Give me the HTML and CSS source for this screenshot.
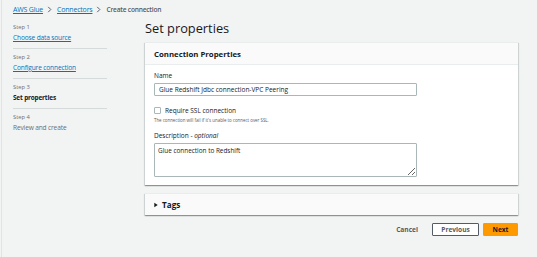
FILE: index.html
```html
<!DOCTYPE html>
<html>
<head>
<meta charset="utf-8">
<link rel="stylesheet" href="styles.css">
</head>
<body>
<div class="page">
  <nav class="crumbs">
    <a class="link">AWS Glue</a>
    <svg class="chev" viewBox="0 0 5 8" width="5" height="7"><path d="M1 1 L4 4 L1 7" fill="none" stroke="#545b64" stroke-width="1.1"/></svg>
    <a class="link">Connectors</a>
    <svg class="chev" viewBox="0 0 5 8" width="5" height="7"><path d="M1 1 L4 4 L1 7" fill="none" stroke="#545b64" stroke-width="1.1"/></svg>
    <span class="crumb-current">Create connection</span>
  </nav>
  <div class="content">
    <ul class="steps">
      <li class="step"><div class="step-label">Step 1</div><a class="link step-name">Choose data source</a></li>
      <li class="step"><div class="step-label">Step 2</div><a class="link step-name">Configure connection</a></li>
      <li class="step"><div class="step-label">Step 3</div><div class="step-name active">Set properties</div></li>
      <li class="step last"><div class="step-label">Step 4</div><div class="step-name disabled">Review and create</div></li>
    </ul>
    <main class="main">
      <h1 class="title">Set properties</h1>
      <section class="card">
        <div class="card-head">Connection Properties</div>
        <div class="card-body">
          <div class="label">Name</div>
          <div class="input">Glue Redshift Jdbc connection-VPC Peering</div>
          <div class="check-row"><span class="checkbox"></span><span class="check-text">Require SSL connection</span></div>
          <div class="hint">The connection will fail if it's unable to connect over SSL.</div>
          <div class="label desc-label">Description - <i>optional</i></div>
          <textarea class="textarea">Glue connection to Redshift</textarea>
        </div>
      </section>
      <section class="card tags">
        <svg class="caret" viewBox="0 0 6 8" width="4" height="6"><path d="M0.5 0.5 L5.5 4 L0.5 7.5 Z" fill="#16191f"/></svg>
        <span>Tags</span>
      </section>
      <div class="actions">
        <span class="btn-link">Cancel</span>
        <span class="btn btn-normal">Previous</span>
        <span class="btn btn-primary">Next</span>
      </div>
    </main>
  </div>
</div>
</body>
</html>
```
FILE: styles.css
```css
* { box-sizing: border-box; }
html, body { margin: 0; padding: 0; }
body {
  background: #f2f3f3;
  font-family: "Open Sans", "Noto Sans", sans-serif;
  color: #16191f;
  width: 537px;
  height: 257px;
  overflow: hidden;
}
.page {
  margin-left: 1px;
  border-left: 1px solid #e1e4e4;
  height: 257px;
  padding: 4px 20px 0 11px;
}
.link {
  color: #0073bb;
  text-decoration: underline;
  text-decoration-thickness: 1px;
  text-underline-offset: 1px;
}
.crumbs {
  display: flex;
  align-items: center;
  height: 11px;
  font-size: 7px;
  letter-spacing: -0.2px;
  line-height: 11px;
  font-weight: 400;
}
.chev { margin: 0 5px 0 4px; }
.crumb-current { color: #545b64; font-weight: 600; font-size: 6.6px; }
.content { display: flex; }
.steps {
  list-style: none;
  margin: 0;
  padding: 4px 0 0 0;
  width: 94px;
  flex: none;
}
.step {
  padding: 4px 0 5px 0;
  border-bottom: 1px solid #d5dbdb;
}
.step.last { border-bottom: none; }
.step-label {
  font-size: 5.8px;
  line-height: 9px;
  color: #687078;
}
.step-name {
  display: block;
  font-size: 6.6px;
  letter-spacing: -0.15px;
  line-height: 11px;
}
.step-name.active { font-weight: 700; color: #16191f; font-size: 6.4px; }
.step-name.disabled { color: #687078; }
.main {
  margin-left: 38px;
  width: 373px;
  flex: none;
}
.title {
  margin: 4px 0 5px 0;
  font-size: 12.8px;
  line-height: 18px;
  font-weight: 400;
}
.card {
  background: #fff;
  box-shadow: 0 1px 1px rgba(0,28,36,0.3), 1px 1px 1px rgba(0,28,36,0.1), -1px 1px 1px rgba(0,28,36,0.1);
  border-top: 1px solid #eaeded;
}
.card-head {
  background: #fafafa;
  border-bottom: 1px solid #eaeded;
  height: 22px;
  display: flex;
  align-items: center;
  padding: 0 9px;
  font-size: 7.8px;
  font-weight: 700;
}
.card-body { padding: 6px 9px 8px 9px; }
.label {
  font-size: 6.5px;
  line-height: 9px;
}
.input {
  margin-top: 3px;
  width: 263px;
  height: 13px;
  border: 1px solid #aab7b8;
  border-radius: 1px;
  font-size: 6.5px;
  line-height: 11px;
  padding: 0 4px;
}
.check-row {
  display: flex;
  align-items: center;
  margin-top: 9px;
  height: 10px;
}
.checkbox {
  width: 7px;
  height: 7px;
  border: 1px solid #aab7b8;
  border-radius: 1px;
  margin-right: 4px;
  background: #fff;
}
.check-text { font-size: 6.5px; }
.hint {
  margin-top: 1px;
  font-size: 4.4px;
  line-height: 8px;
  color: #545b64;
}
.desc-label { margin-top: 7px; }
.textarea {
  display: block;
  margin-top: 3px;
  width: 263px;
  height: 34px;
  border: 1px solid #aab7b8;
  border-radius: 1px;
  font-family: "Open Sans", "Noto Sans", sans-serif;
  font-size: 6.4px;
  line-height: 9px;
  padding: 2px 3px;
  color: #16191f;
  resize: vertical;
}
.tags {
  margin-top: 8px;
  height: 22px;
  display: flex;
  align-items: center;
  padding: 0 9px;
  background: #fafafa;
  font-size: 8.2px;
  font-weight: 700;
}
.caret { margin-right: 4px; }
.actions {
  display: flex;
  justify-content: flex-end;
  align-items: center;
  margin-top: 8px;
  font-size: 6.6px;
  font-weight: 700;
}
.btn-link { color: #545b64; margin-right: 14px; }
.btn {
  height: 13px;
  display: flex;
  align-items: center;
  justify-content: center;
  border-radius: 1px;
}
.btn-normal {
  width: 47px;
  border: 1px solid #545b64;
  background: #fff;
  color: #545b64;
  margin-right: 4px;
}
.btn-primary {
  width: 35px;
  background: #ff9900;
  border: 1px solid #ff9900;
  color: #16191f;
}
```
